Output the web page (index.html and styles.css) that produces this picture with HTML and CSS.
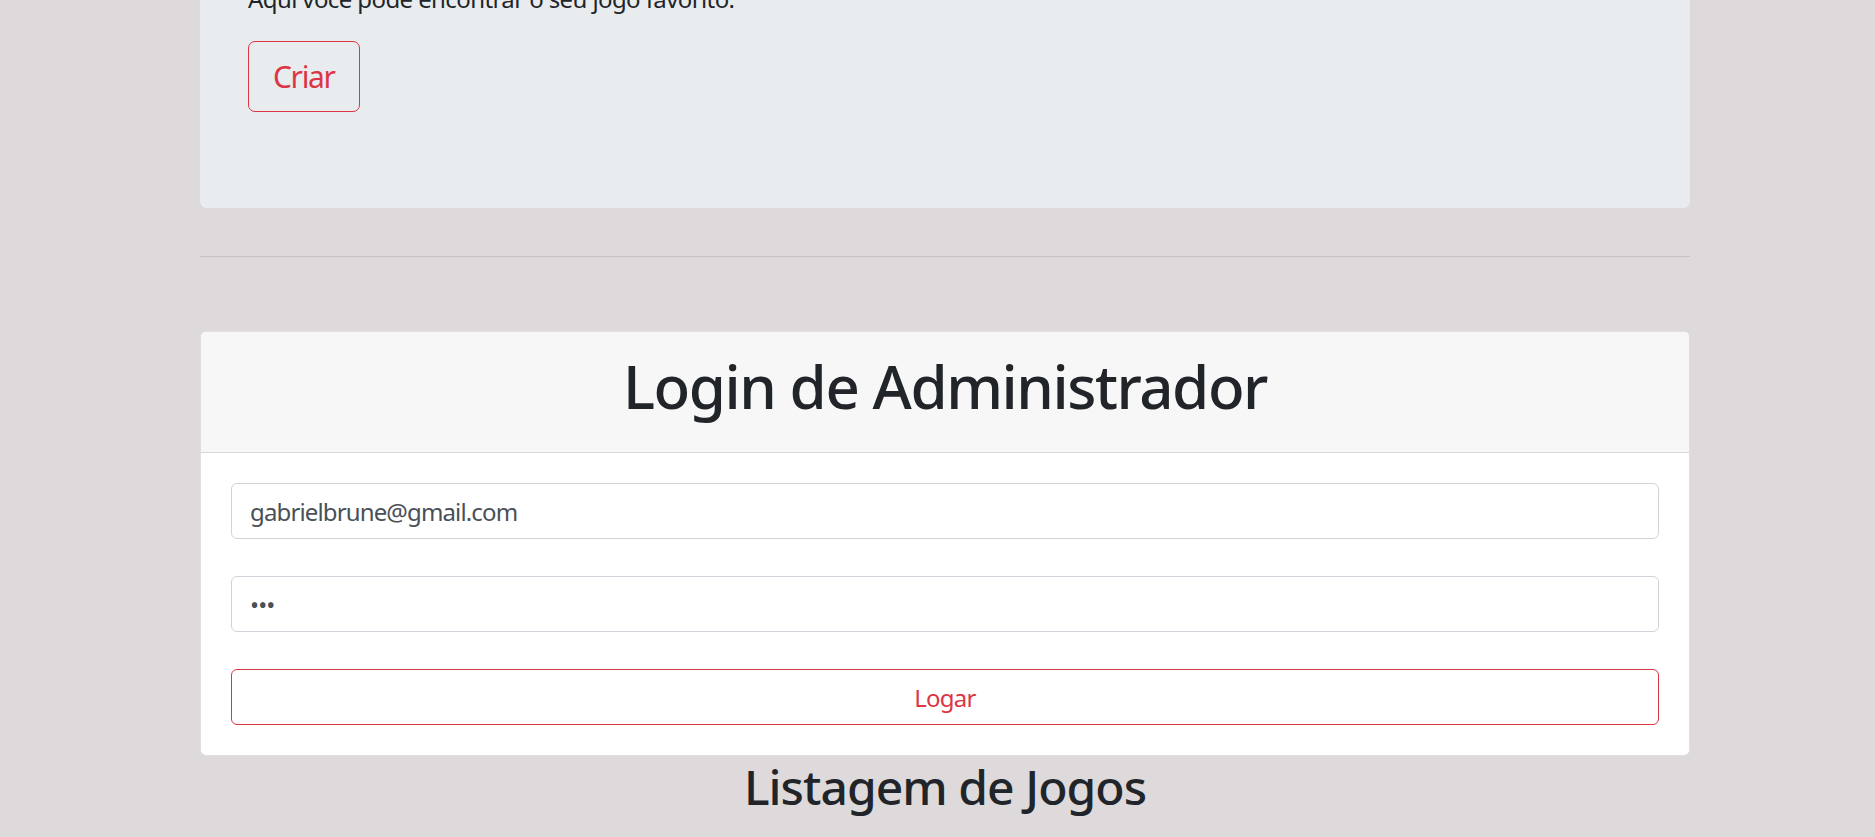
FILE: index.html
```html
<!DOCTYPE html>
<html lang="pt-BR">
<head>
<meta charset="utf-8">
<title>Jogos</title>
<link rel="stylesheet" href="styles.css">
</head>
<body>
<main class="container">
  <section class="jumbotron">
    <p class="intro">Aqui você pode encontrar o seu jogo favorito.</p>
    <a class="btn-criar" href="#">Criar</a>
  </section>
  <hr class="divider">
  <section class="card">
    <header class="card-header">
      <h1 class="card-title">Login de Administrador</h1>
    </header>
    <form class="card-body">
      <input class="field" type="email" value="gabrielbrune@gmail.com">
      <input class="field" type="password" value="123">
      <button class="btn-logar" type="button">Logar</button>
    </form>
  </section>
  <h2 class="list-title">Listagem de Jogos</h2>
</main>
</body>
</html>
```

FILE: styles.css
```css
html, body {
  margin: 0;
  padding: 0;
  height: 100%;
  overflow: hidden;
}
body {
  background: #dedadb;
  color: #212529;
  font-family: "Noto Sans", "Open Sans", sans-serif;
  font-size: 24px;
  line-height: 1.5;
  letter-spacing: -0.03em;
}
.container {
  width: 1490px;
  margin-left: 200px;
}
.jumbotron {
  margin-top: -115px;
  background: #e9ecef;
  padding: 96px 48px;
  border-radius: 7px;
}
.intro {
  margin: 0 0 24px;
  font-size: 24px;
  line-height: 36px;
  letter-spacing: -0.025em;
}
.btn-criar {
  display: inline-block;
  font-size: 30px;
  line-height: 45px;
  padding: 12px 24px;
  border: 1.5px solid #dc3545;
  border-radius: 7px;
  color: #dc3545;
  text-decoration: none;
  letter-spacing: -0.045em;
}
.divider {
  margin: 48px 0 0;
  border: 0;
  border-top: 1.5px solid rgba(0, 0, 0, 0.1);
  height: 0;
}
.card {
  margin-top: 74px;
  background: #fff;
  border: 1.5px solid rgba(0, 0, 0, 0.125);
  border-radius: 6px;
  overflow: hidden;
}
.card-header {
  background: #f7f7f7;
  padding: 18px 30px;
  border-bottom: 1.5px solid rgba(0, 0, 0, 0.125);
}
.card-title {
  margin: 0 0 12px;
  font-size: 60px;
  line-height: 72px;
  font-weight: 500;
  text-align: center;
  letter-spacing: -0.024em;
}
.card-body {
  display: flex;
  flex-direction: column;
  gap: 37px;
  padding: 30px 30px 30px;
  margin: 0;
}
.field {
  box-sizing: border-box;
  height: 56px;
  width: 100%;
  padding: 9px 18px;
  font-family: inherit;
  font-size: 24px;
  letter-spacing: -0.036em;
  color: #495057;
  background: #fff;
  border: 1.5px solid #ced4da;
  border-radius: 6px;
  outline: none;
}
.btn-logar {
  box-sizing: border-box;
  height: 56px;
  width: 100%;
  font-family: inherit;
  font-size: 24px;
  letter-spacing: -0.03em;
  color: #dc3545;
  background: transparent;
  border: 1.5px solid #dc3545;
  border-radius: 6px;
}
.list-title {
  margin: 2px 0 0;
  font-size: 48px;
  line-height: 57.6px;
  font-weight: 500;
  text-align: center;
  letter-spacing: -0.02em;
}
```
